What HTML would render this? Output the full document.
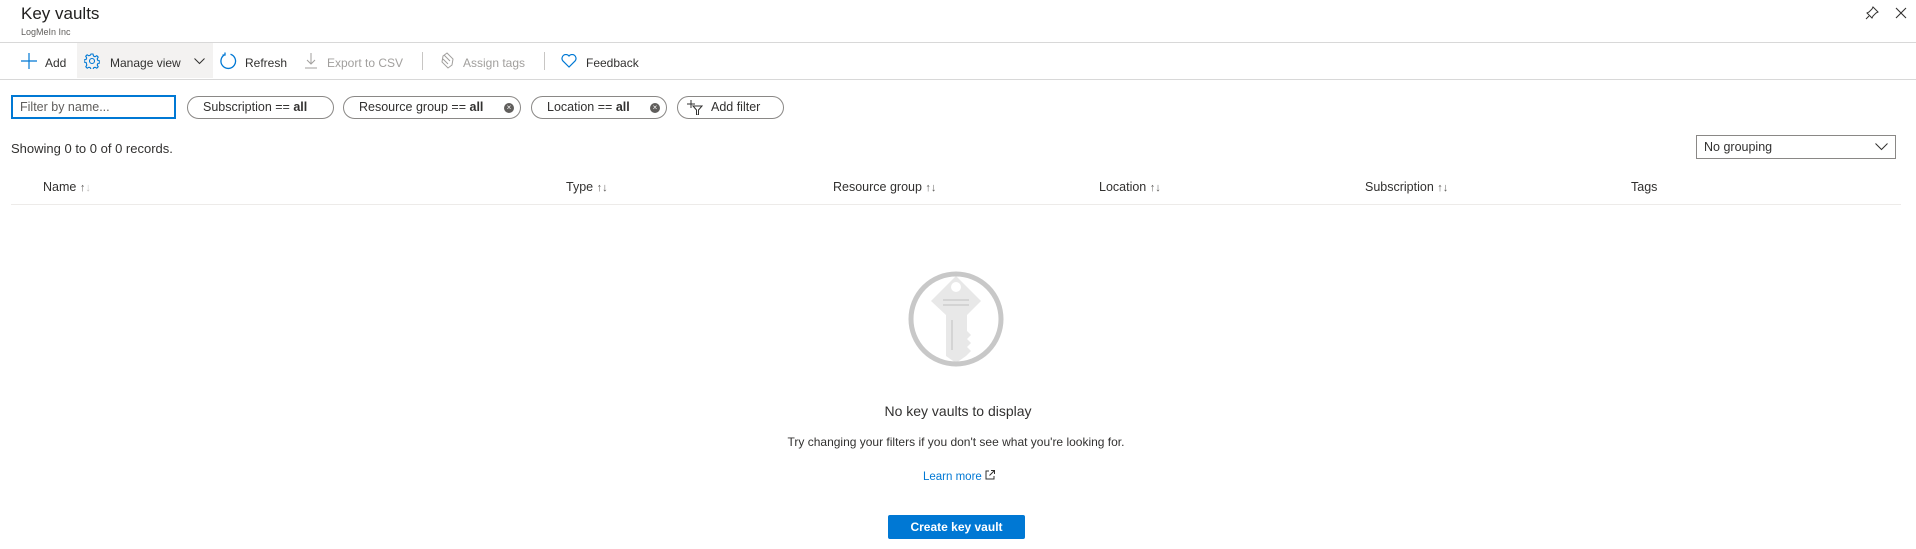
<!DOCTYPE html>
<html><head><meta charset="utf-8"><style>
*{margin:0;padding:0;box-sizing:border-box}
body{width:1916px;height:549px;background:#fff;font-family:"Liberation Sans",sans-serif;color:#323130;position:relative;overflow:hidden}
.a{position:absolute;white-space:nowrap}
.tb{font-size:12px;top:56px}
.pill{position:absolute;top:96px;height:23px;border:1px solid #8a8886;border-radius:12px;font-size:12.5px;line-height:21px;padding-left:15px}
.pill b{font-weight:bold}
.x{position:absolute;top:6px;width:10px;height:10px;border-radius:50%;background:#605e5c;color:#fff;font-size:8px;line-height:10px;text-align:center}
.h{font-size:12.5px;top:180px}
.s{color:#605e5c;font-size:11px}
</style></head><body>
<div class="a" style="left:21px;top:4px;font-size:17px;color:#201f1e">Key vaults</div>
<div class="a" style="left:21px;top:27px;font-size:9px;color:#605e5c">LogMeIn Inc</div>
<svg class="a" style="left:1865px;top:6px" width="14" height="14" viewBox="0 0 14 14" fill="none" stroke="#323130" stroke-width="1"><path d="M8 1l5 5-2 1-3 3-1 2-5-5 2-1 3-3zM4 10l-3 3"/></svg>
<svg class="a" style="left:1895px;top:7px" width="12" height="12" viewBox="0 0 12 12" stroke="#323130" stroke-width="1.1"><path d="M1 1l10 10M11 1L1 11"/></svg>
<div class="a" style="left:0;top:42px;width:1916px;height:1px;background:#d8d8d8"></div>
<div class="a" style="left:77px;top:43px;width:136px;height:35px;background:#f3f2f1"></div>
<div class="a" style="left:0;top:79px;width:1916px;height:1px;background:#d8d8d8"></div>
<svg class="a" style="left:21px;top:53px" width="16" height="16" viewBox="0 0 16 16" stroke="#0078d4" stroke-width="1.2"><path d="M8 0v16M0 8h16"/></svg>
<div class="a tb" style="left:45px">Add</div>
<svg class="a" style="left:84px;top:53px" width="16" height="16" viewBox="0 0 16 16" fill="none" stroke="#0078d4" stroke-width="1.1"><circle cx="8" cy="8" r="2.5"/><path d="M7 1h2l.5 2 1.5.7 1.8-1 1.4 1.4-1 1.8.7 1.6 2 .5v2l-2 .5-.7 1.5 1 1.8-1.4 1.4-1.8-1-1.5.7-.5 2H7l-.5-2-1.5-.7-1.8 1-1.4-1.4 1-1.8L2.1 9.5 0 9V7l2-.5.7-1.5-1-1.8 1.4-1.4 1.8 1 1.5-.7z"/></svg>
<div class="a tb" style="left:110px">Manage view</div>
<svg class="a" style="left:194px;top:58px" width="11" height="7" viewBox="0 0 11 7" fill="none" stroke="#323130"><path d="M.5.5l5 5 5-5"/></svg>
<svg class="a" style="left:220px;top:52px" width="17" height="18" viewBox="0 0 17 18" fill="none" stroke="#0078d4" stroke-width="1.3"><path d="M10.5 2.2A7.3 7.3 0 1 1 5 2.6M5 0.5v2.5H2.5"/></svg>
<div class="a tb" style="left:245px">Refresh</div>
<svg class="a" style="left:305px;top:53px" width="12" height="16" viewBox="0 0 12 16" fill="none" stroke="#a19f9d"><path d="M6 0v11M2 7l4 4 4-4M0 15h12"/></svg>
<div class="a tb" style="left:327px;color:#a19f9d">Export to CSV</div>
<div class="a" style="left:422px;top:52px;width:1px;height:18px;background:#c8c6c4"></div>
<svg class="a" style="left:440px;top:52px" width="14" height="17" viewBox="0 0 14 17" fill="none" stroke="#a19f9d"><path d="M7 1l6 6-1 6-4 3-6-6 1-6zM4 3l6 6M3 7l5 5"/></svg>
<div class="a tb" style="left:463px;color:#a19f9d">Assign tags</div>
<div class="a" style="left:544px;top:52px;width:1px;height:18px;background:#c8c6c4"></div>
<svg class="a" style="left:561px;top:54px" width="16" height="14" viewBox="0 0 16 14" fill="none" stroke="#0078d4" stroke-width="1.2"><path d="M8 13L1.8 6.8A3.7 3.7 0 0 1 8 2a3.7 3.7 0 0 1 6.2 4.8z"/></svg>
<div class="a tb" style="left:586px">Feedback</div>

<div class="a" style="left:11px;top:95px;width:165px;height:24px;border:2px solid #0078d4;font-size:12.5px;line-height:20px;padding-left:7px;color:#605e5c">Filter by name...</div>
<div class="pill" style="left:187px;width:147px">Subscription == <b>all</b></div>
<div class="pill" style="left:343px;width:178px">Resource group == <b>all</b><span class="x" style="left:160px">×</span></div>
<div class="pill" style="left:531px;width:136px">Location == <b>all</b><span class="x" style="left:118px">×</span></div>
<div class="pill" style="left:677px;width:107px;padding-left:33px">Add filter</div>
<svg class="a" style="left:687px;top:100px" width="16" height="15" viewBox="0 0 16 15" fill="none" stroke="#323130"><path d="M4 0v8M0 4h8M6 6h9l-3.5 4v5h-2v-5z"/></svg>

<div class="a" style="left:11px;top:141px;font-size:13px">Showing 0 to 0 of 0 records.</div>
<div class="a" style="left:1696px;top:135px;width:200px;height:24px;border:1px solid #8a8886;font-size:12.5px;line-height:22px;padding-left:7px">No grouping</div>
<svg class="a" style="left:1875px;top:143px" width="13" height="8" viewBox="0 0 13 8" fill="none" stroke="#323130"><path d="M.5.5l6 6 6-6"/></svg>

<div class="a h" style="left:43px">Name <span class="s">↑<span style="color:#c8c6c4">↓</span></span></div>
<div class="a h" style="left:566px">Type <span class="s">↑↓</span></div>
<div class="a h" style="left:833px">Resource group <span class="s">↑↓</span></div>
<div class="a h" style="left:1099px">Location <span class="s">↑↓</span></div>
<div class="a h" style="left:1365px">Subscription <span class="s">↑↓</span></div>
<div class="a h" style="left:1631px">Tags</div>
<div class="a" style="left:11px;top:204px;width:1890px;height:1px;background:#edebe9"></div>

<svg class="a" style="left:907px;top:270px" width="98" height="98" viewBox="0 0 98 98">
<path d="M49 6L74 31 60 45v16l4 4-4 4 4 4-4 4 4 4-5 5-10 7-10-7V45L24 31z" fill="#e8e8e8"/>
<circle cx="49" cy="17" r="5" fill="#fff"/>
<path d="M36 30h26M36 35h26" stroke="#d4d4d4" stroke-width="2"/>
<path d="M45 50v30" stroke="#d4d4d4" stroke-width="2"/>
<circle cx="49" cy="49" r="45" fill="none" stroke="#c8c8c8" stroke-width="5"/>
</svg>
<div class="a" style="left:0;width:1916px;text-align:center;top:403px;font-size:14px;color:#323130">No key vaults to display</div>
<div class="a" style="left:756px;width:400px;text-align:center;top:435px;font-size:12px">Try changing your filters if you don't see what you're looking for.</div>
<div class="a" style="left:923px;top:470px;font-size:11.5px;color:#0078d4">Learn more <svg width="10" height="10" viewBox="0 0 10 10" fill="none" stroke="#323130"><path d="M4 1H1v8h8V6M6 .5h3.5V4M9.5.5L4.5 5.5"/></svg></div>
<div class="a" style="left:888px;top:515px;width:137px;height:24px;background:#0078d4;color:#fff;font-size:12px;font-weight:bold;text-align:center;line-height:24px;border-radius:2px">Create key vault</div>
</body></html>
